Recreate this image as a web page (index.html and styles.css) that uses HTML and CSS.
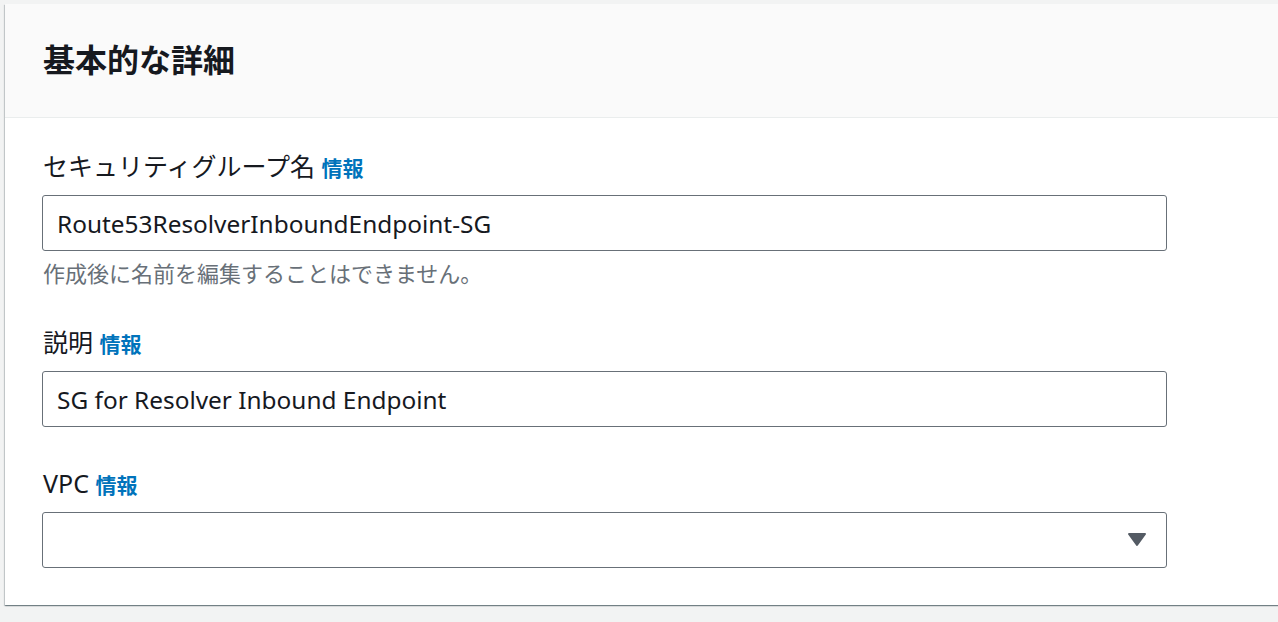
FILE: index.html
```html
<!DOCTYPE html>
<html lang="ja">
<head>
<meta charset="utf-8">
<title>基本的な詳細</title>
<link rel="stylesheet" href="styles.css">
</head>
<body>
<div class="page">
  <section class="card">
    <header class="card-header">
      <h2 class="card-title">基本的な詳細</h2>
    </header>
    <div class="card-body">
      <div class="field">
        <div class="label">セキュリティグループ名 <a class="info" href="#">情報</a></div>
        <div class="input">Route53ResolverInboundEndpoint-SG</div>
        <div class="hint">作成後に名前を編集することはできません。</div>
      </div>
      <div class="field">
        <div class="label">説明 <a class="info" href="#">情報</a></div>
        <div class="input">SG for Resolver Inbound Endpoint</div>
      </div>
      <div class="field">
        <div class="label">VPC <a class="info" href="#">情報</a></div>
        <div class="input select">
          <span class="select-value"></span>
          <svg class="caret" width="20" height="16" viewBox="0 0 20 16" aria-hidden="true">
            <polygon points="2,2 18,2 10,13" fill="#545b64" stroke="#545b64" stroke-width="2" stroke-linejoin="round"/>
          </svg>
        </div>
      </div>
    </div>
  </section>
</div>
</body>
</html>
```
FILE: styles.css
```css
html, body {
  margin: 0;
  padding: 0;
  background: #f2f3f3;
  overflow: hidden;
  font-family: "Noto Sans", "Noto Sans CJK JP", sans-serif;
  color: #16191f;
}

.page {
  padding: 4px 0 0 5px;
  height: 622px;
  box-sizing: border-box;
}

.card {
  width: 1320px;
  background: #ffffff;
  box-shadow: 0 1px 1px 0 rgba(0, 28, 36, 0.35), 1px 1px 1px 0 rgba(0, 28, 36, 0.15), -1px 1px 1px 0 rgba(0, 28, 36, 0.15);
}

.card-header {
  height: 114px;
  box-sizing: border-box;
  background: #fafafa;
  border-bottom: 1px solid #eaeded;
  display: flex;
  align-items: center;
  padding: 0 0 6px 38px;
}

.card-title {
  margin: 0;
  font-family: "Noto Sans CJK JP", sans-serif;
  font-size: 32px;
  font-weight: 700;
  line-height: 40px;
  color: #16191f;
}

.card-body {
  padding: 33px 0 37px 37px;
  display: flex;
  flex-direction: column;
  gap: 41px;
}

.field {
  display: flex;
  flex-direction: column;
  width: 1125px;
}

.label {
  font-family: "Noto Sans", "Noto Sans CJK JP", sans-serif;
  font-size: 25px;
  line-height: 30px;
  height: 30px;
  padding: 0 0 4px 1px;
  color: #16191f;
}

.info {
  font-size: 21px;
  font-weight: 700;
  color: #0073bb;
  text-decoration: none;
  font-family: "Noto Sans CJK JP", sans-serif;
}

.input {
  margin-top: 10px;
  height: 56px;
  box-sizing: border-box;
  border: 1px solid #687078;
  border-radius: 3px;
  padding: 0 14px;
  display: flex;
  align-items: center;
  font-size: 24.4px;
  color: #16191f;
  background: #ffffff;
}

.select {
  justify-content: space-between;
  padding-right: 19px;
}

.caret {
  display: block;
}

.hint {
  margin-top: 9px;
  font-size: 22px;
  line-height: 26px;
  color: #687078;
  padding-left: 1px;
}
```
